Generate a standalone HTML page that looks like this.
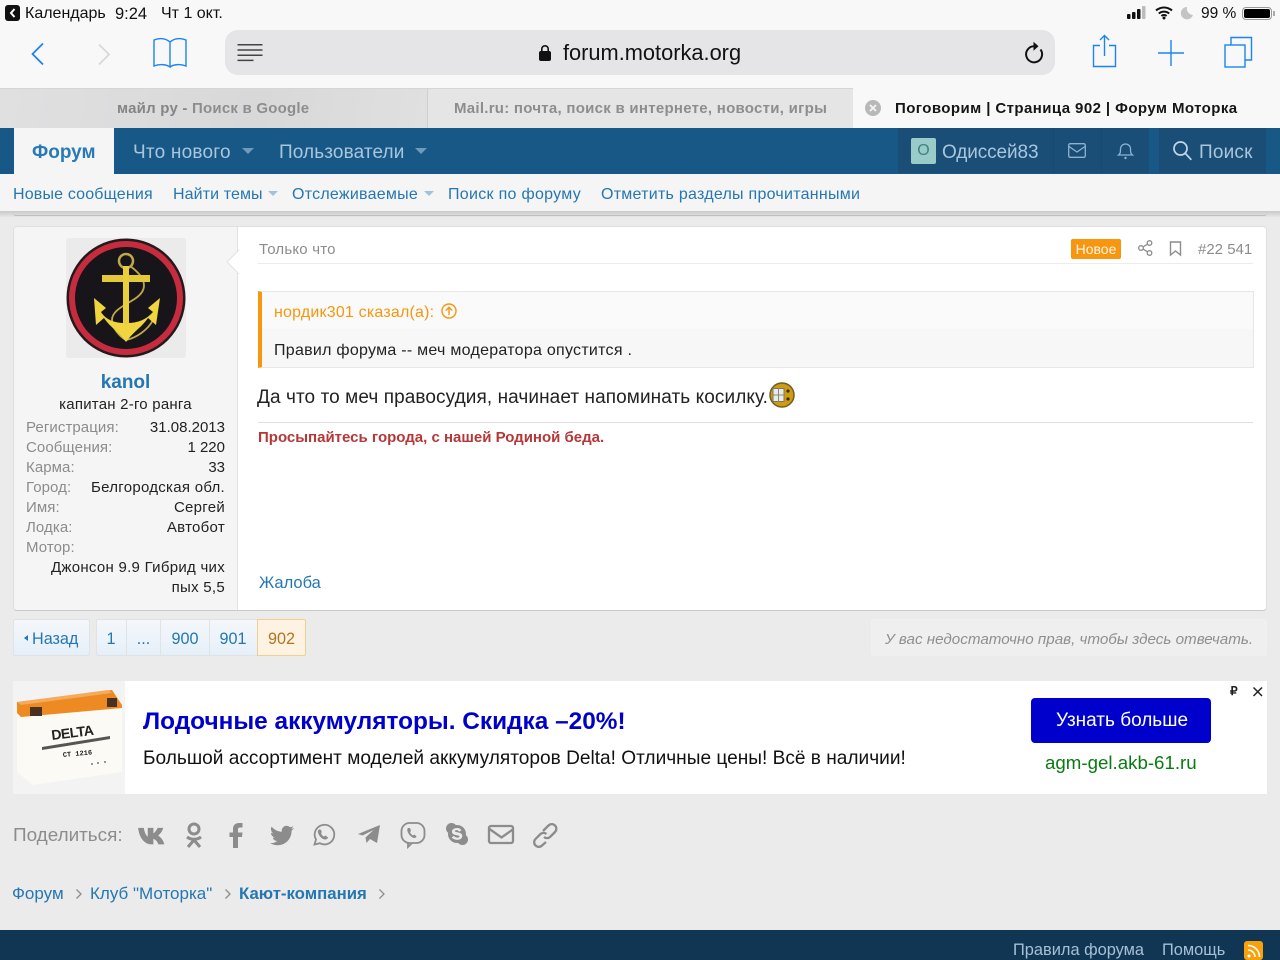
<!DOCTYPE html>
<html lang="ru"><head><meta charset="utf-8"><title>Форум Моторка</title>
<style>
html,body{margin:0;padding:0;width:1280px;height:960px;overflow:hidden;background:#ebebeb;font-family:"Liberation Sans",sans-serif;color:#1c1c1c}
.a{position:absolute}
.t{position:absolute;white-space:nowrap;line-height:20px}
.r{text-align:right}
.b{color:#2577b1}
.g{color:#8c8c8c}
.l{font-size:15px;letter-spacing:.08px}
.v{font-size:15px;color:#222;letter-spacing:.28px}
svg{position:absolute;overflow:visible}
</style></head><body>

<!-- Safari chrome -->
<div class="a" style="left:0;top:0;width:1280px;height:88px;background:#f8f8f8"></div>
<div class="a" style="left:5px;top:5px;width:15px;height:16px;background:#111;border-radius:3px"></div>
<svg style="left:5px;top:5px" width="15" height="16"><path d="M9.500 4L6 8l3.500 4" fill="none" stroke="#fff" stroke-width="2"/></svg>
<div class="t" style="left:25px;top:4px;font-size:16px;color:#111">Календарь</div>
<div class="t" style="left:115px;top:4px;font-size:16.500px;color:#111">9:24</div>
<div class="t" style="left:161px;top:4px;font-size:16px;color:#111">Чт 1 окт.</div>
<svg style="left:1127px;top:6px" width="22" height="14"><rect x="0" y="8" width="3.500" height="5" rx="1" fill="#111"/><rect x="5" y="6" width="3.500" height="7" rx="1" fill="#111"/><rect x="10" y="3" width="3.500" height="10" rx="1" fill="#111"/><rect x="15" y="0" width="3.500" height="13" rx="1" fill="#bbb"/></svg>
<svg style="left:1155px;top:5px" width="20" height="15"><path d="M1 5.500a12 12 0 0 1 16 0M3.800 8.500a8 8 0 0 1 10.400 0M6.400 11a4 4 0 0 1 5.200 0" fill="none" stroke="#111" stroke-width="2"/><circle cx="9" cy="13" r="1.500" fill="#111"/></svg>
<svg style="left:1181px;top:6px" width="14" height="14"><path d="M6 1a6.200 6.200 0 1 0 6 8A6.500 6.500 0 0 1 6 1z" fill="#c4c4c4"/></svg>
<div class="t" style="left:1201px;top:4px;font-size:15.500px;color:#111">99 %</div>
<div class="a" style="left:1242px;top:7px;width:30px;height:13px;border:1px solid #999;border-radius:4px;box-sizing:border-box"></div>
<div class="a" style="left:1244px;top:9px;width:26px;height:9px;background:#000;border-radius:2px"></div>
<div class="a" style="left:1273px;top:11px;width:2px;height:5px;background:#aaa"></div>

<svg style="left:31px;top:42px" width="16" height="24"><path d="M12 1.500L1.500 12 12 22.500" fill="none" stroke="#1c84f0" stroke-width="1.800"/></svg>
<svg style="left:97px;top:43px" width="16" height="24"><path d="M2 1.500L12 11.500 2 21.500" fill="none" stroke="#d8d8d8" stroke-width="1.800"/></svg>
<svg style="left:152px;top:37px" width="36" height="32" fill="none" stroke="#1c84f0" stroke-width="1.400"><path d="M2 3c5-2 11-2 16 2v25c-4-3-11-3-16-1zM18 5c5-4 11-4 16-2v26c-5-2-12-2-16 1"/></svg>

<div class="a" style="left:225px;top:30px;width:830px;height:45px;background:#e5e5e8;border-radius:13px"></div>
<svg style="left:237px;top:43px" width="26" height="18" fill="none" stroke="#444" stroke-width="1.500"><path d="M0.500 1.800h25M0.500 7h25M0.500 12.200h25M0.500 17.400h16"/></svg>
<svg style="left:538px;top:44px" width="14" height="18"><rect x="1" y="7" width="12" height="10" rx="2" fill="#111"/><path d="M3.800 7.500V5a3.200 3.200 0 0 1 6.400 0v2.500" fill="none" stroke="#111" stroke-width="1.600"/></svg>
<div class="t" style="left:563px;top:41px;font-size:21.800px;line-height:24px;color:#111">forum.motorka.org</div>
<svg style="left:1022px;top:41px" width="24" height="24" fill="none" stroke="#111" stroke-width="2"><path d="M18.500 8.500a8 8 0 1 1-6.500-3.200h2"/><path d="M11.500 0.800l5 4.500-5 4.500z" fill="#111" stroke="none"/></svg>

<svg style="left:1092px;top:34px" width="26" height="34" fill="none" stroke="#1c84f0" stroke-width="1.400"><path d="M8 11.500H1.500v21h22v-21H17M12.500 22V1.500M8 6l4.500-4.500L17 6"/></svg>
<svg style="left:1158px;top:39px" width="26" height="28" fill="none" stroke="#1c84f0" stroke-width="1.400"><path d="M13 1v26M0 14h26"/></svg>
<svg style="left:1224px;top:36px" width="32" height="32" fill="none" stroke="#1c84f0" stroke-width="1.400"><rect x="1" y="9" width="20" height="22"/><path d="M7 9V1.500h20.500V24H21"/></svg>

<!-- Tabs -->
<div class="a" style="left:0;top:88px;width:427px;height:40px;background:linear-gradient(100deg,#e0e0e1,#d8d8d9 60%,#e0e0e0);box-sizing:border-box;border-top:1px solid #d5d5d5"></div>
<div class="a" style="left:427px;top:88px;width:426px;height:40px;background:#e5e5e5;box-sizing:border-box;border-left:1px solid #cfcfcf;border-top:1px solid #d5d5d5"></div>
<div class="a" style="left:853px;top:88px;width:427px;height:40px;background:#f8f8f8"></div>
<div class="t" style="left:117px;top:99px;font-size:15px;font-weight:bold;color:#858585;letter-spacing:.22px">майл ру - <span style="color:#8d8d8d">Поиск в Google</span></div>
<div class="t" style="left:454px;top:99px;font-size:15px;font-weight:bold;color:#8d8d8d;letter-spacing:.27px">Mail.ru: почта, поиск в интернете, новости, игры</div>
<div class="a" style="left:865px;top:100px;width:16px;height:16px;border-radius:50%;background:#b8b8b8"></div>
<svg style="left:865px;top:100px" width="16" height="16"><path d="M5 5l6 6M11 5l-6 6" stroke="#f4f4f4" stroke-width="1.800"/></svg>
<div class="t" style="left:895px;top:99px;font-size:15px;font-weight:bold;color:#151515;letter-spacing:.42px">Поговорим | Страница 902 | Форум Моторка</div>

<!-- Nav -->
<div class="a" style="left:0;top:128px;width:1280px;height:46px;background:#185886"></div>
<div class="a" style="left:14px;top:128px;width:100px;height:46px;background:#f5f5f5"></div>
<div class="t" style="left:32px;top:143px;font-size:19px;font-weight:bold;color:#2a7ab5">Форум</div>
<div class="t" style="left:133px;top:143px;font-size:19px;color:#a9c6dc;letter-spacing:.22px">Что нового</div>
<div class="a" style="left:242px;top:148px;border:6px solid transparent;border-top:6px solid #6f9abb;border-bottom:0"></div>
<div class="t" style="left:279px;top:143px;font-size:19px;color:#a9c6dc;letter-spacing:.12px">Пользователи</div>
<div class="a" style="left:415px;top:148px;border:6px solid transparent;border-top:6px solid #6f9abb;border-bottom:0"></div>

<div class="a" style="left:898px;top:128px;width:368px;height:45px;background:#1a4e76"></div>
<div class="a" style="left:1149px;top:128px;width:10px;height:45px;background:#185886"></div>
<div class="a" style="left:1053px;top:128px;width:1px;height:45px;background:#184970"></div>
<div class="a" style="left:1101px;top:128px;width:1px;height:45px;background:#184970"></div>
<div class="a" style="left:911px;top:138px;width:25px;height:26px;background:#99cbc9;border-radius:2px"></div>
<div class="t" style="left:911px;top:141px;width:25px;text-align:center;font-size:16px;color:#3e8380">О</div>
<div class="t" style="left:942px;top:143px;font-size:19px;color:#a9c6dc;letter-spacing:-.1px">Одиссей83</div>
<svg style="left:1068px;top:143px" width="18" height="15" fill="none" stroke="#8fb3cf" stroke-width="1.300"><rect x=".7" y=".7" width="16.600" height="13.600" rx="1.500"/><path d="M1 3.500l8 5.500 8-5.500"/></svg>
<svg style="left:1117px;top:141px" width="17" height="19" fill="none" stroke="#8fb3cf" stroke-width="1.300"><path d="M1.500 14c2-1.500 2-3 2-6a5 5 0 0 1 10 0c0 3 0 4.500 2 6z"/><circle cx="8.500" cy="17" r="1.200" fill="#8fb3cf" stroke="none"/></svg>
<svg style="left:1173px;top:141px" width="20" height="20" fill="none" stroke="#c4d8e8" stroke-width="1.700"><circle cx="7.500" cy="7.500" r="6.500"/><path d="M12.300 12.300l6 6.500"/></svg>
<div class="t" style="left:1199px;top:143px;font-size:19px;color:#a9c6dc;letter-spacing:.2px">Поиск</div>

<!-- Subnav -->
<div class="a" style="left:0;top:174px;width:1280px;height:37px;background:#f5f5f5"></div>
<div class="t b" style="left:13px;top:185px;font-size:16px;letter-spacing:.17px">Новые сообщения</div>
<div class="t b" style="left:173px;top:185px;font-size:16px;letter-spacing:.1px">Найти темы</div>
<div class="a" style="left:268px;top:191px;border:5px solid transparent;border-top:5px solid #a3c1d9;border-bottom:0"></div>
<div class="t b" style="left:292px;top:185px;font-size:16px;letter-spacing:.25px">Отслеживаемые</div>
<div class="a" style="left:424px;top:191px;border:5px solid transparent;border-top:5px solid #a3c1d9;border-bottom:0"></div>
<div class="t b" style="left:448px;top:185px;font-size:16px;letter-spacing:.3px">Поиск по форуму</div>
<div class="t b" style="left:601px;top:185px;font-size:16px;letter-spacing:.26px">Отметить разделы прочитанными</div>
<div class="a" style="left:0;top:211px;width:1280px;height:6px;background:linear-gradient(#c9c9c9,#e6e6e6)"></div>
<div class="a" style="left:13px;top:211px;width:1254px;height:5px;border-bottom:1px solid #bdbdbd;border-radius:0 0 3px 3px;box-sizing:border-box"></div>

<!-- Post -->
<div class="a" style="left:13px;top:226px;width:1254px;height:385px;background:#fff;border:1px solid #dfdfdf;border-bottom:1px solid #c9c9c9;border-radius:4px;box-sizing:border-box"></div>
<div class="a" style="left:14px;top:227px;width:224px;height:383px;background:#f5f5f5;border-right:1px solid #e2e2e2;border-radius:3px 0 0 3px;box-sizing:border-box"></div>
<svg style="left:226px;top:250px" width="14" height="24"><path d="M13 0L1 12l12 12" fill="#fff" stroke="#e2e2e2"/><rect x="12" y="1" width="2" height="22" fill="#fff"/></svg>

<!-- avatar -->
<div class="a" style="left:66px;top:238px;width:120px;height:120px;background:#ebebeb;border-radius:3px"></div>
<svg style="left:66px;top:238px" width="120" height="120">
<circle cx="60" cy="60" r="59.500" fill="#241a1c"/><circle cx="60" cy="60" r="57" fill="#c72c3e"/><circle cx="60" cy="60" r="51" fill="#17151a"/>
<g fill="none" stroke="#bfa84a">
<circle cx="60" cy="23" r="7" stroke-width="2.500"/>
<path d="M64 28c14 10 20 22 6 32-10 7-24 12-24 22 0 8 8 17 14 20 10-2 22-10 27-20" stroke-width="1.800"/>
</g>
<rect x="36" y="37" width="48" height="7" fill="#e3c93a"/>
<rect x="57" y="28" width="6" height="60" fill="#e9cf3c"/>
<path d="M28 60L30 87L38 80C44 89 52 93 60 104C68 93 76 89 82 80L90 87L94 60L82 70L87 74C80 82 71 85 62 85L60 87 58 85C49 85 40 82 35 74L40 70Z" fill="#f0d53f"/>
</svg>
<div class="t b" style="left:14px;top:373px;width:223px;text-align:center;font-size:19px;font-weight:bold">kanol</div>
<div class="t" style="left:14px;top:395px;width:223px;text-align:center;font-size:15px;color:#222;letter-spacing:.22px">капитан 2-го ранга</div>
<div class="t g l" style="left:26px;top:418px">Регистрация:</div><div class="t r" style="right:1055px;top:418px;font-size:15px;color:#222">31.08.2013</div>
<div class="t g l" style="left:26px;top:438px">Сообщения:</div><div class="t r" style="right:1055px;top:438px;font-size:15px;color:#222">1 220</div>
<div class="t g l" style="left:26px;top:458px">Карма:</div><div class="t r" style="right:1055px;top:458px;font-size:15px;color:#222">33</div>
<div class="t g l" style="left:26px;top:478px">Город:</div><div class="t r v" style="right:1055px;top:478px">Белгородская обл.</div>
<div class="t g l" style="left:26px;top:498px">Имя:</div><div class="t r v" style="right:1055px;top:498px">Сергей</div>
<div class="t g l" style="left:26px;top:518px">Лодка:</div><div class="t r v" style="right:1055px;top:518px">Автобот</div>
<div class="t g l" style="left:26px;top:538px">Мотор:</div>
<div class="t r v" style="right:1055px;top:558px">Джонсон 9.9 Гибрид чих</div>
<div class="t r v" style="right:1055px;top:578px">пых 5,5</div>

<!-- post head -->
<div class="t g" style="left:259px;top:240px;font-size:15px;letter-spacing:.2px">Только что</div>
<div class="a" style="left:258px;top:263px;width:995px;height:1px;background:#ececec"></div>
<div class="a" style="left:1071px;top:239px;width:50px;height:20px;background:#f7960f;border-radius:2px"></div>
<div class="t" style="left:1071px;top:239px;width:50px;text-align:center;font-size:14px;color:#fff5e6">Новое</div>
<svg style="left:1138px;top:240px" width="15" height="16" fill="none" stroke="#8c8c8c" stroke-width="1.300"><circle cx="3" cy="8" r="2.300"/><circle cx="11.500" cy="3" r="2.300"/><circle cx="11.500" cy="13" r="2.300"/><path d="M5 7l4.500-2.800M5 9l4.500 2.800"/></svg>
<svg style="left:1169px;top:241px" width="13" height="15" fill="none" stroke="#8c8c8c" stroke-width="1.400"><path d="M1.500 1h10v13l-5-4-5 4z"/></svg>
<div class="t g" style="left:1198px;top:240px;font-size:15px">#22 541</div>

<!-- quote -->
<div class="a" style="left:258px;top:291px;width:996px;height:77px;background:#f7f7f7;border:1px solid #e7e7e7;border-left:4px solid #f7960f;box-sizing:border-box"></div>
<div class="a" style="left:262px;top:292px;width:991px;height:37px;background:#fafafa"></div>
<div class="t" style="left:274px;top:303px;font-size:16px;color:#f7960f;letter-spacing:.2px">нордик301 сказал(а):</div>
<svg style="left:441px;top:303px" width="16" height="16" fill="none" stroke="#f7960f" stroke-width="1.400"><circle cx="8" cy="8" r="7"/><path d="M8 12V4.500M4.800 7.500L8 4.300l3.200 3.200"/></svg>
<div class="t" style="left:274px;top:341px;font-size:16px;color:#222;letter-spacing:.27px">Правил форума -- меч модератора опустится .</div>
<div class="t" style="left:257px;top:387px;font-size:19px;line-height:22px;color:#222;letter-spacing:.09px">Да что то меч правосудия, начинает напоминать косилку.</div>
<svg style="left:769px;top:382px" width="26" height="26"><circle cx="13" cy="13" r="12" fill="#d09a12" stroke="#6f5f28" stroke-width="1.500"/><rect x="4" y="6.500" width="11" height="13" fill="#e6eced" stroke="#7a7a5a"/><path d="M9.500 6.500v13M4 13h11" stroke="#8a8a70"/><circle cx="19" cy="9" r="1.600" fill="#3c2c05"/><circle cx="19" cy="17" r="1.600" fill="#3c2c05"/></svg>
<div class="a" style="left:258px;top:422px;width:995px;height:1px;background:#dfdfdf"></div>
<div class="t" style="left:258px;top:428px;font-size:15px;font-weight:bold;color:#b53737">Просыпайтесь города, с нашей Родиной беда.</div>
<div class="t b" style="left:259px;top:573px;font-size:16.500px">Жалоба</div>

<!-- pager -->
<div class="a" style="left:13px;top:619px;width:77px;height:37px;background:linear-gradient(#f4f7fa,#e6f0f9);border:1px solid #dfe3e6;border-radius:2px;box-sizing:border-box"></div>
<div class="a" style="left:24px;top:635px;border:3.500px solid transparent;border-right:4px solid #2577b1;border-left:0"></div>
<div class="t b" style="left:32px;top:629px;font-size:16.200px">Назад</div>
<div class="a" style="left:96px;top:619px;width:210px;height:37px;background:linear-gradient(#f4f7fa,#e6f0f9);border:1px solid #dfe3e6;border-radius:2px;box-sizing:border-box"></div>
<div class="a" style="left:126px;top:620px;width:1px;height:35px;background:#dfe3e6"></div>
<div class="a" style="left:160px;top:620px;width:1px;height:35px;background:#dfe3e6"></div>
<div class="a" style="left:209px;top:620px;width:1px;height:35px;background:#dfe3e6"></div>
<div class="t b" style="left:96px;top:629px;width:30px;text-align:center;font-size:16.200px">1</div>
<div class="t b" style="left:127px;top:629px;width:33px;text-align:center;font-size:16.200px">...</div>
<div class="t b" style="left:161px;top:629px;width:48px;text-align:center;font-size:16.200px">900</div>
<div class="t b" style="left:209px;top:629px;width:48px;text-align:center;font-size:16.200px">901</div>
<div class="a" style="left:257px;top:619px;width:49px;height:37px;background:#fef3e3;border:1px solid #f5cd91;border-radius:0 2px 2px 0;box-sizing:border-box"></div>
<div class="t" style="left:257px;top:629px;width:49px;text-align:center;font-size:16.200px;color:#b3741d">902</div>

<div class="a" style="left:871px;top:619px;width:396px;height:37px;background:#efefef;border:1px solid #f0f0f0;border-radius:3px;box-sizing:border-box"></div>
<div class="t" style="left:885px;top:630px;font-size:15.200px;font-style:italic;color:#8f8f8f">У вас недостаточно прав, чтобы здесь отвечать.</div>

<!-- Ad -->
<div class="a" style="left:13px;top:681px;width:1254px;height:113px;background:#fff"></div>
<div class="a" style="left:13px;top:681px;width:112px;height:113px;background:#f3f3f3"></div>
<svg style="left:13px;top:681px" width="112" height="113">
<path d="M4 30L109 26v65L20 104 4 91z" fill="#fbfaf5"/>
<path d="M4 21L99 9l10 15v3L8 36 4 32z" fill="#ee8a22"/>
<path d="M4 21L95 9l4 3L8 24z" fill="#f6ab5c"/>
<rect x="17" y="26" width="12" height="9" fill="#4a3020"/><rect x="94" y="17" width="10" height="9" fill="#4a3020"/>
<path d="M29 66l68-11v3L29 69z" fill="#555"/>
<text x="39" y="59" font-family="Liberation Sans" font-size="14" font-weight="bold" fill="#222" transform="rotate(-7 39 59)" letter-spacing="-.5">DELTA</text>
<text x="50" y="76" font-family="Liberation Mono" font-size="7" font-weight="bold" fill="#222" transform="rotate(-5 50 76)">CT 1216</text>
<circle cx="79" cy="83" r="1" fill="#777"/><circle cx="85" cy="82" r="1" fill="#777"/><circle cx="92" cy="81" r="1" fill="#777"/>
</svg>
<div class="t" style="left:143px;top:707px;font-size:24.400px;line-height:30px;font-weight:bold;color:#0000cc">Лодочные аккумуляторы. Скидка –20%!</div>
<div class="t" style="left:143px;top:749px;font-size:19.100px;color:#111">Большой ассортимент моделей аккумуляторов Delta! Отличные цены! Всё в наличии!</div>
<div class="a" style="left:1031px;top:698px;width:180px;height:45px;background:#0000cc;border-radius:4px"></div>
<div class="t" style="left:1032px;top:711px;width:180px;text-align:center;font-size:19px;color:#fff">Узнать больше</div>
<div class="t" style="left:1045px;top:753px;font-size:18.700px;color:#0a7a12">agm-gel.akb-61.ru</div>
<div class="t" style="left:1230px;top:681px;font-size:12px;color:#222;font-weight:bold">₽</div>
<svg style="left:1252px;top:686px" width="12" height="12"><path d="M1.500 1.500l8.500 8.500M10 1.500L1.500 10" stroke="#222" stroke-width="1.500"/></svg>

<!-- Share -->
<div class="t" style="left:13px;top:826px;font-size:18.900px;color:#8c8c8c">Поделиться:</div>
<svg style="left:136px;top:822px" width="430" height="28" fill="#8c8c8c">
<path transform="translate(1 1.500) scale(1.130 1.100)" d="M1 4h5c.6 4 2 7 3.500 8V4h5v5c1.500-1 3-3 3.700-5h5c-.8 3-2.500 5.500-4.500 7 2.500 1.500 4.500 4 5.500 8h-5.300c-.8-2.500-2.500-4.500-4.400-5v5h-1.500C6.500 19 2 13 1 4z"/>
<g fill="none" stroke="#8c8c8c" stroke-width="3"><circle cx="58" cy="7" r="5"/><path d="M51 15c4 3 10 3 14 0M58 18l-6 7M58 18l6 7"/></g>
<path d="M97 26V15h-3.500v-4.500H97V7c0-4 2.500-6 6-6h3.500v4.500H104c-1.500 0-2 .7-2 2v3h4.500L106 15h-4v11z"/>
<path transform="translate(134 1.500)" d="M23.953 4.570a10 10 0 01-2.825.775 4.958 4.958 0 002.163-2.723c-.951.555-2.005.959-3.127 1.184a4.920 4.920 0 00-8.384 4.482C7.690 8.095 4.067 6.130 1.640 3.162a4.822 4.822 0 00-.666 2.475c0 1.710.870 3.213 2.188 4.096a4.904 4.904 0 01-2.228-.616v.060a4.923 4.923 0 003.946 4.827 4.996 4.996 0 01-2.212.085 4.936 4.936 0 004.604 3.417 9.867 9.867 0 01-6.102 2.105c-.390 0-.779-.023-1.170-.067a13.995 13.995 0 007.557 2.209c9.053 0 13.998-7.496 13.998-13.985 0-.210 0-.420-.015-.630A9.935 9.935 0 0024 4.590z"/>
<g fill="none" stroke="#8c8c8c" stroke-width="1.800"><path d="M178.500 22.500l1.500-5a9.800 9.800 0 1 1 3.800 3.700z"/></g>
<path d="M183 7.500c-1.500 1-1.500 3 0 5.500s4 4.500 6 4.500c1.500 0 3-1 3-2l-2.500-2-1.500 1c-1.500-.5-2.500-2-3-3.500l1-1-1.500-2.500z"/>
<path d="M222 12L244 3l-3 18-7-4-3.500 4-1-5.500 8-7.500-11 5.500z"/>
<g fill="none" stroke="#8c8c8c" stroke-width="1.800"><rect x="265.500" y="1" width="23" height="20" rx="8"/><path d="M272 21v4l3.500-3.500"/></g>
<path d="M272 6c-1 1-1 3 .5 5.500s3.500 4 5.500 4.500c1.500 0 2.500-1 2.500-1.500l-2-2-1.500 1c-1-.5-2.500-2-3-3.500l1-1-1-3z"/>
<circle cx="321" cy="12" r="9"/><circle cx="315.500" cy="6.500" r="5.500"/><circle cx="326.500" cy="17.500" r="5.500"/>
<path d="M321.500 6c-3.500 0-5.500 1.500-5.500 3.700 0 4.300 7.500 2.800 7.500 4.800 0 1.700-4.300 1.600-5.500-.6l-2.200 1.400c1.700 3.400 10.500 3.800 10.500-1.400 0-4.300-7.500-3.200-7.500-4.800 0-1.300 3.300-1.600 4.400.6l2.200-1.500C324.500 6.900 323.200 6 321.500 6z" fill="#ebebeb"/>
<g fill="none" stroke="#8c8c8c" stroke-width="2.300"><rect x="353" y="4" width="24" height="17" rx="2"/><path d="M353.500 7l12 8.500L377.500 7"/></g>
<g fill="none" stroke="#8c8c8c" stroke-width="2.300"><path d="M407 9l5.500-5.500a4.500 4.500 0 0 1 6.500 6.500l-5 5a4.500 4.500 0 0 1-6 0"/><path d="M410 20l-4 3.500a4.500 4.500 0 0 1-6.500-6.500l5-5a4.500 4.500 0 0 1 6 0"/></g>
</svg>

<!-- Breadcrumb -->
<div class="t b" style="left:12px;top:884px;font-size:17px">Форум</div>
<svg style="left:75px;top:888px" width="8" height="12"><path d="M1.500 1.500L6 6l-4.500 4.500" fill="none" stroke="#8c8c8c" stroke-width="1.300"/></svg>
<div class="t b" style="left:90px;top:884px;font-size:17px">Клуб "Моторка"</div>
<svg style="left:224px;top:888px" width="8" height="12"><path d="M1.500 1.500L6 6l-4.500 4.500" fill="none" stroke="#8c8c8c" stroke-width="1.300"/></svg>
<div class="t b" style="left:239px;top:884px;font-size:16.800px;font-weight:bold">Кают-компания</div>
<svg style="left:378px;top:888px" width="8" height="12"><path d="M1.500 1.500L6 6l-4.500 4.500" fill="none" stroke="#8c8c8c" stroke-width="1.300"/></svg>

<!-- Footer -->
<div class="a" style="left:0;top:930px;width:1280px;height:30px;background:#113654"></div>
<div class="t" style="left:1013px;top:940px;font-size:16.400px;color:#a5c0d6">Правила форума</div>
<div class="t" style="left:1162px;top:940px;font-size:16.400px;color:#a5c0d6">Помощь</div>
<div class="a" style="left:1244px;top:941px;width:19px;height:19px;background:#f7a10d;border-radius:3px"></div>
<svg style="left:1244px;top:941px" width="19" height="19" fill="none" stroke="#fff" stroke-width="1.600"><path d="M4 9a7 7 0 0 1 7 7M4 4.500a11.500 11.500 0 0 1 11.500 11.500"/><circle cx="5" cy="15" r="1.500" fill="#fff" stroke="none"/></svg>
</body></html>
